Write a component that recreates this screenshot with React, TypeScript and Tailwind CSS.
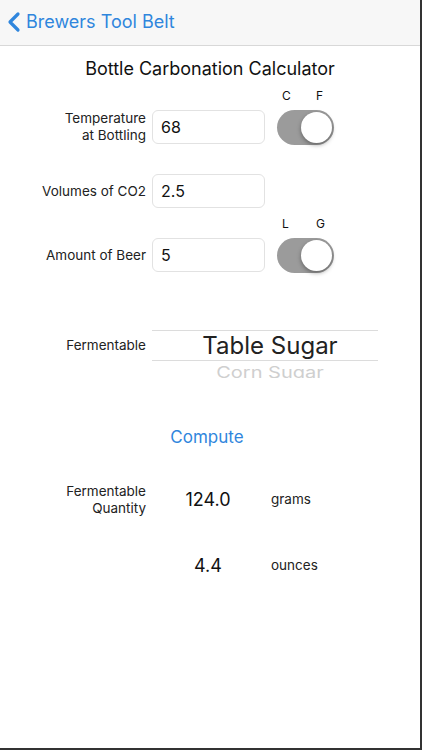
import { ChevronLeft } from 'lucide-react'

const font = { fontFamily: 'Inter, "Noto Sans", sans-serif' }

const Toggle = () => (
  <div className="relative w-[57px] h-[35px] rounded-full bg-[#9b9b9b]">
    <div className="absolute right-[2px] top-[2px] w-[31px] h-[31px] rounded-full bg-white shadow-[0_2px_4px_rgba(0,0,0,0.35)]" />
  </div>
)

const Field = ({ value }: { value: string }) => (
  <div className="w-[113px] h-[34px] rounded-[6px] border border-[#e2e2e2] bg-white flex items-center pl-[8px] text-[16px] text-[#111]">
    {value}
  </div>
)

const UnitLabels = ({ left, right }: { left: string; right: string }) => (
  <div className="flex h-[14px] text-[12px] leading-[14px] text-[#111]">
    <div className="w-[282px]" />
    <span className="w-[34px]">{left}</span>
    <span>{right}</span>
  </div>
)

export default function App() {
  return (
    <div style={font} className="w-[422px] h-[750px] bg-white border-r-2 border-b-2 border-[#333] overflow-hidden">
      <div className="h-[46px] bg-[#f7f7f7] border-b border-[#d8d8d8] flex items-center pb-[2px] text-[#2f86dd]">
        <ChevronLeft size={32} strokeWidth={2.4} className="-ml-[2px]" />
        <span className="text-[18px] -ml-[4px]">Brewers Tool Belt</span>
      </div>

      <h1 className="mt-[12px] text-center text-[18px] leading-[22px] text-[#111]">Bottle Carbonation Calculator</h1>

      <div className="mt-[9px]">
        <UnitLabels left="C" right="F" />
      </div>

      <div className="mt-[6px] flex items-center h-[36px]">
        <div className="w-[146px] text-right text-[13.5px] leading-[17px] text-[#222]">
          Temperature
          <br />
          at Bottling
        </div>
        <div className="ml-[6px]">
          <Field value="68" />
        </div>
        <div className="ml-[12px]">
          <Toggle />
        </div>
      </div>

      <div className="mt-[28px] flex items-center h-[36px]">
        <div className="w-[146px] text-right text-[13.5px] text-[#222]">Volumes of CO2</div>
        <div className="ml-[6px]">
          <Field value="2.5" />
        </div>
      </div>

      <div className="mt-[8px]">
        <UnitLabels left="L" right="G" />
      </div>

      <div className="mt-[6px] flex items-center h-[36px]">
        <div className="w-[146px] text-right text-[13.5px] text-[#222]">Amount of Beer</div>
        <div className="ml-[6px]">
          <Field value="5" />
        </div>
        <div className="ml-[12px]">
          <Toggle />
        </div>
      </div>

      {/* fermentable wheel picker */}
      <div className="mt-[57px] flex">
        <div className="w-[146px] h-[31px] flex items-center justify-end text-[13.5px] text-[#222]">Fermentable</div>
        <div className="ml-[6px] w-[226px]">
          <div className="h-[31px] border-y border-[#dcdcdc] flex items-center justify-center pl-[10px] text-[24px] text-[#222]">
            Table Sugar
          </div>
          <div className="h-[17px] overflow-hidden flex justify-center pl-[10px]">
            <span className="block text-[20px] leading-[20px] text-[#cfcfcf] mt-[3px] scale-y-[0.8] origin-top">Corn Sugar</span>
          </div>
        </div>
      </div>

      <div className="mt-[47px] text-center text-[17px] text-[#2f86dd] pr-[6px]">Compute</div>

      <div className="mt-[32px] flex items-center">
        <div className="w-[146px] text-right text-[13.5px] leading-[17px] text-[#222]">
          Fermentable
          <br />
          Quantity
        </div>
        <div className="w-[124px] text-center text-[18px] text-[#111]">124.0</div>
        <div className="ml-[1px] text-[13.5px] text-[#222]">grams</div>
      </div>

      <div className="mt-[35px] flex items-center">
        <div className="w-[146px]" />
        <div className="w-[124px] text-center text-[18px] text-[#111]">4.4</div>
        <div className="ml-[1px] text-[13.5px] text-[#222]">ounces</div>
      </div>
    </div>
  )
}
